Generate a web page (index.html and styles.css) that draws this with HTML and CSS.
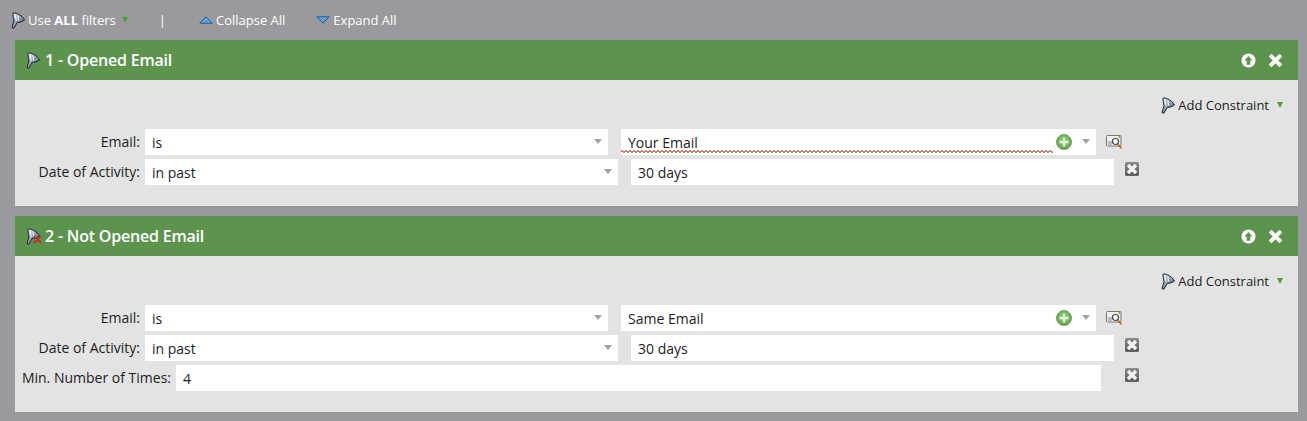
FILE: index.html
```html
<!DOCTYPE html>
<html lang="en">
<head>
    <meta charset="UTF-8">
    <title>Smart List</title>
    <link rel="stylesheet" href="styles.css">
</head>
<body>
    <svg class="defs" width="0" height="0">
        <defs>
            <linearGradient id="funnelFill" x1="0" y1="0" x2="1" y2="1">
                <stop offset="0" stop-color="#f2f5f8"/>
                <stop offset="0.5" stop-color="#8c9bb0"/>
                <stop offset="1" stop-color="#39465c"/>
            </linearGradient>
            <linearGradient id="boxFill" x1="0" y1="0" x2="0" y2="1">
                <stop offset="0" stop-color="#8a8a8a"/>
                <stop offset="1" stop-color="#5c5c5c"/>
            </linearGradient>
            <radialGradient id="plusFill" cx="0.5" cy="0.4" r="0.6">
                <stop offset="0" stop-color="#9ad27f"/>
                <stop offset="1" stop-color="#5fa349"/>
            </radialGradient>
            <symbol id="funnel" viewBox="0 0 15 17">
                <path d="M3 1 C7 0.5 12.5 4 14.5 8 C12 10 9.5 10.3 7.3 10.3 L3.8 16.3 L2 15.6 L4 8.5 C3.4 5.5 2.8 3.2 3 1 Z" fill="url(#funnelFill)" stroke="#1c2433" stroke-width="1" stroke-linejoin="round"/>
                <path d="M5 2.5 L6.3 8.8 M8 3.8 L8.6 8.6" stroke="#fff" stroke-width="0.9" fill="none"/>
            </symbol>
            <symbol id="blueUp" viewBox="0 0 14 8">
                <path d="M7 0.8 L13.2 7.2 H0.8 Z" fill="#62a0d6" stroke="#1f5f97"/>
            </symbol>
            <symbol id="blueDown" viewBox="0 0 14 8">
                <path d="M0.8 0.8 H13.2 L7 7.2 Z" fill="#62a0d6" stroke="#1f5f97"/>
            </symbol>
            <symbol id="removeBox" viewBox="0 0 14 14">
                <rect x="0" y="0" width="14" height="14" rx="1.5" fill="url(#boxFill)"/>
                <path d="M4.2 4.2 L9.8 9.8 M9.8 4.2 L4.2 9.8" stroke="#f2f2f2" stroke-width="3.4" stroke-linecap="square"/>
            </symbol>
            <symbol id="plusCircle" viewBox="0 0 16 16">
                <circle cx="8" cy="8" r="7.5" fill="url(#plusFill)" stroke="#5a8f4a" stroke-width="0.8"/>
                <path d="M8 3.5 V12.5 M3.5 8 H12.5" stroke="#e4f7d8" stroke-width="2.4"/>
            </symbol>
            <symbol id="lookup" viewBox="0 0 17 16">
                <rect x="0.5" y="1.5" width="14.5" height="10.5" rx="1" fill="#f0f0f0" stroke="#777"/>
                <path d="M2 8 H6 M2 10 H6" stroke="#888"/>
                <circle cx="9.5" cy="7.5" r="3" fill="#fff" stroke="#444" stroke-width="1.2"/>
                <path d="M11.8 10 L15.5 14.5" stroke="#a8662c" stroke-width="1.6"/>
                <rect x="12.5" y="2" width="2" height="2" fill="#b8a040"/>
            </symbol>
        </defs>
    </svg>

    <div class="toolbar">
        <span class="tool tool-filters">
            <svg class="funnel"><use href="#funnel"/></svg>
            <span>Use <b>ALL</b> filters</span>
            <span class="tri-down small"></span>
        </span>
        <span class="tool-sep">|</span>
        <span class="tool tool-collapse"><svg class="blue-tri"><use href="#blueUp"/></svg>Collapse All</span>
        <span class="tool tool-expand"><svg class="blue-tri"><use href="#blueDown"/></svg>Expand All</span>
    </div>

    <div class="filter">
        <div class="filter-head">
            <svg class="funnel"><use href="#funnel"/></svg>
            <span class="filter-title">1 - Opened Email</span>
            <svg class="head-btn" viewBox="0 0 16 16"><circle cx="8" cy="8" r="7.5" fill="#fff"/><path d="M8 3.2 L12.4 8 H9.9 V12.4 H6.1 V8 H3.6 Z" fill="#5c944d"/></svg>
            <svg class="head-btn close" viewBox="0 0 14 14"><path d="M2 2 L12 12 M12 2 L2 12" stroke="#fff" stroke-width="3.6"/></svg>
        </div>
        <div class="filter-body">
            <div class="constraint">
                <svg class="funnel"><use href="#funnel"/></svg>
                <span>Add Constraint</span>
                <span class="tri-down"></span>
            </div>
            <div class="row">
                <label class="row-label">Email:</label>
                <div class="field sel-a">is<span class="caret"></span></div>
                <div class="field sel-b">
                    <span class="squiggle">Your Email</span>
                    <svg class="plus"><use href="#plusCircle"/></svg>
                    <span class="caret"></span>
                </div>
                <svg class="lookup"><use href="#lookup"/></svg>
            </div>
            <div class="row">
                <label class="row-label">Date of Activity:</label>
                <div class="field sel-c">in past<span class="caret"></span></div>
                <div class="field inp-a">30 days</div>
                <svg class="remove"><use href="#removeBox"/></svg>
            </div>
        </div>
    </div>

    <div class="filter">
        <div class="filter-head">
            <svg class="funnel"><use href="#funnel"/></svg>
            <svg class="red-x" viewBox="0 0 10 10"><path d="M1 1 L9 9 M9 1 L1 9" stroke="#c8312b" stroke-width="2.2"/></svg>
            <span class="filter-title">2 - Not Opened Email</span>
            <svg class="head-btn" viewBox="0 0 16 16"><circle cx="8" cy="8" r="7.5" fill="#fff"/><path d="M8 3.2 L12.4 8 H9.9 V12.4 H6.1 V8 H3.6 Z" fill="#5c944d"/></svg>
            <svg class="head-btn close" viewBox="0 0 14 14"><path d="M2 2 L12 12 M12 2 L2 12" stroke="#fff" stroke-width="3.6"/></svg>
        </div>
        <div class="filter-body">
            <div class="constraint">
                <svg class="funnel"><use href="#funnel"/></svg>
                <span>Add Constraint</span>
                <span class="tri-down"></span>
            </div>
            <div class="row">
                <label class="row-label">Email:</label>
                <div class="field sel-a">is<span class="caret"></span></div>
                <div class="field sel-b">
                    <span>Same Email</span>
                    <svg class="plus"><use href="#plusCircle"/></svg>
                    <span class="caret"></span>
                </div>
                <svg class="lookup"><use href="#lookup"/></svg>
            </div>
            <div class="row">
                <label class="row-label">Date of Activity:</label>
                <div class="field sel-c">in past<span class="caret"></span></div>
                <div class="field inp-a">30 days</div>
                <svg class="remove"><use href="#removeBox"/></svg>
            </div>
            <div class="row">
                <label class="row-label wide">Min. Number of Times:</label>
                <div class="field inp-b">4</div>
                <svg class="remove far"><use href="#removeBox"/></svg>
            </div>
        </div>
    </div>
</body>
</html>
```

FILE: styles.css
```css
body {
    margin: 0;
    height: 421px;
    overflow: hidden;
    background: #9a999d;
    font-family: "Open Sans", "Liberation Sans", sans-serif;
    font-size: 14px;
    color: #1c1c1c;
}

.defs {
    position: absolute;
}

.funnel {
    width: 15px;
    height: 17px;
}

.toolbar {
    display: flex;
    align-items: center;
    height: 40px;
    color: #fff;
    font-size: 13px;
}

.toolbar .funnel {
    margin-left: 10px;
    margin-right: 3px;
}

.tool {
    display: flex;
    align-items: center;
}

.tool-sep {
    margin-left: 31px;
    margin-right: 33px;
}

.tool-filters .tri-down {
    margin-left: 6px;
}

.tool-expand {
    margin-left: 31px;
}

.blue-tri {
    width: 14px;
    height: 8px;
    margin-right: 3px;
}

.tri-down {
    width: 0;
    height: 0;
    margin-left: 8px;
    border-left: 3.5px solid transparent;
    border-right: 3.5px solid transparent;
    border-top: 6px solid #4f9a3c;
}

.tri-down.small {
    border-left-width: 3px;
    border-right-width: 3px;
    border-top-width: 6px;
}

.filter {
    margin: 0 9px 10px 15px;
}

.filter-head {
    display: flex;
    align-items: center;
    height: 40px;
    padding: 0 15px 0 10px;
    background: #5c944d;
    color: #fff;
}

.filter-head .funnel {
    margin-right: 5px;
}

.filter-title {
    flex: 1;
    font-size: 16px;
    font-weight: 600;
    letter-spacing: -0.2px;
}

.red-x {
    width: 9px;
    height: 9px;
    margin: 7px 3px 0 -12px;
}

.head-btn {
    width: 15px;
    height: 15px;
}

.head-btn.close {
    width: 15px;
    height: 15px;
    margin-left: 12px;
}

.filter-body {
    display: flex;
    flex-direction: column;
    gap: 4px;
    padding: 16px 0 21px;
    background: #e3e3e3;
}

.constraint {
    display: flex;
    align-items: center;
    justify-content: flex-end;
    height: 18px;
    margin-bottom: 11px;
    padding-right: 15px;
    font-size: 13px;
}

.constraint .funnel {
    margin-right: 3px;
}

.row {
    display: flex;
    align-items: center;
    height: 26px;
}

.row-label {
    flex: none;
    width: 125px;
    margin-right: 5px;
    margin-top: -2px;
    text-align: right;
    font-size: 14px;
}

.row-label.wide {
    width: 156px;
}

.field {
    display: flex;
    align-items: center;
    height: 26px;
    box-sizing: border-box;
    padding: 0 6px 0 7px;
    background: #fff;
}

.sel-a {
    width: 463px;
    margin-right: 13px;
}

.sel-b {
    width: 475px;
}

.sel-c {
    width: 473px;
    margin-right: 13px;
}

.inp-a {
    width: 483px;
}

.inp-b {
    width: 925px;
}

.caret {
    width: 0;
    height: 0;
    margin-left: auto;
    margin-top: -2px;
    border-left: 4.5px solid transparent;
    border-right: 4.5px solid transparent;
    border-top: 5px solid #a3a3a3;
}

.sel-b .caret {
    margin-left: 10px;
}

.sel-b span:first-child {
    flex: 1;
}

.squiggle {
    align-self: stretch;
    display: flex;
    align-items: center;
    margin: 0 0 2px -7px;
    padding: 2px 0 0 7px;
    background:
        linear-gradient(45deg, transparent 35%, #c9826f 35% 65%, transparent 65%) left bottom / 4px 3px repeat-x,
        linear-gradient(135deg, transparent 35%, #c9826f 35% 65%, transparent 65%) 2px bottom / 4px 3px repeat-x;
}

.plus {
    width: 16px;
    height: 16px;
    margin: 0 0 0 3px;
}

.lookup {
    width: 17px;
    height: 16px;
    margin-left: 10px;
}

.remove {
    width: 14px;
    height: 14px;
    margin: -6px 0 0 11px;
}

.remove.far {
    margin-left: 24px;
}
```
